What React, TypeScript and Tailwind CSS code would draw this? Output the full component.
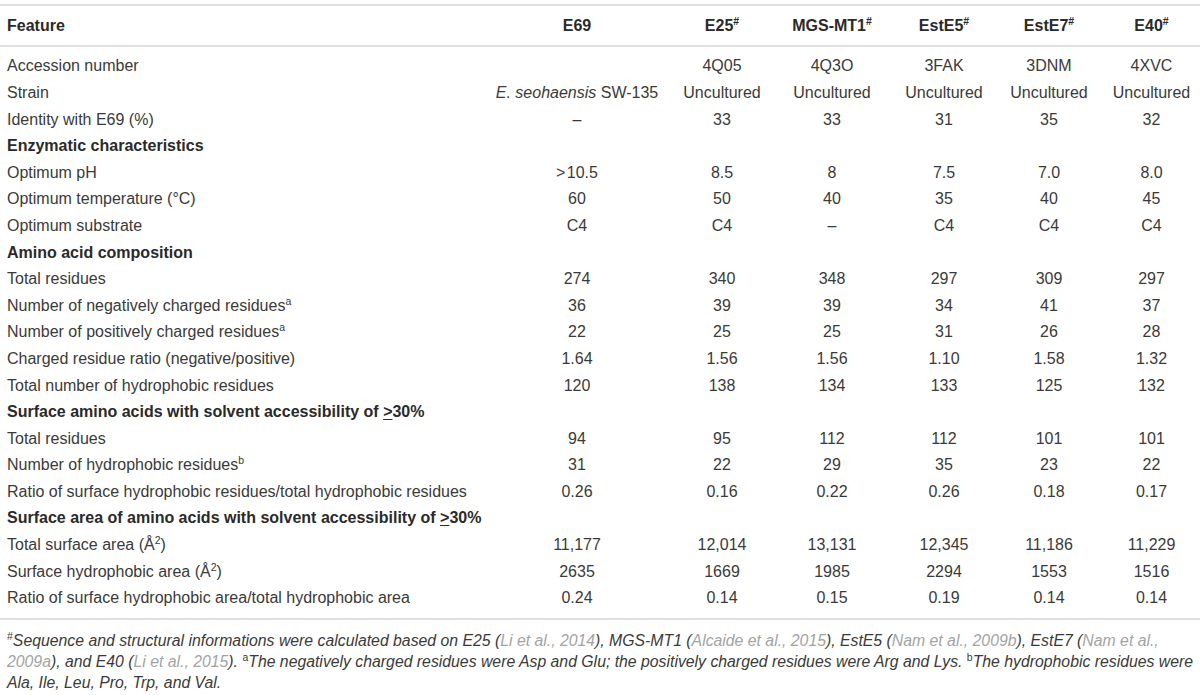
import React from "react";

const Sup = ({ children }: { children: React.ReactNode }) => (
  <span className="relative top-[-6px] text-[10.5px] leading-none not-italic">{children}</span>
);

const G = ({ children }: { children: React.ReactNode }) => (
  <span className="text-[#a3a3a3]">{children}</span>
);

type Row =
  | { kind: "section"; label: React.ReactNode }
  | { kind: "data"; label: React.ReactNode; values: React.ReactNode[] };

const Ge = () => <span className="underline decoration-1 underline-offset-2">&gt;</span>;

const rows: Row[] = [
  { kind: "data", label: "Accession number", values: ["", "4Q05", "4Q3O", "3FAK", "3DNM", "4XVC"] },
  {
    kind: "data",
    label: "Strain",
    values: [
      <>
        <i>E. seohaensis</i> SW-135
      </>,
      "Uncultured",
      "Uncultured",
      "Uncultured",
      "Uncultured",
      "Uncultured",
    ],
  },
  { kind: "data", label: "Identity with E69 (%)", values: ["–", "33", "33", "31", "35", "32"] },
  { kind: "section", label: "Enzymatic characteristics" },
  { kind: "data", label: "Optimum pH", values: [">\u200A10.5", "8.5", "8", "7.5", "7.0", "8.0"] },
  { kind: "data", label: "Optimum temperature (\u00B0C)", values: ["60", "50", "40", "35", "40", "45"] },
  { kind: "data", label: "Optimum substrate", values: ["C4", "C4", "–", "C4", "C4", "C4"] },
  { kind: "section", label: "Amino acid composition" },
  { kind: "data", label: "Total residues", values: ["274", "340", "348", "297", "309", "297"] },
  {
    kind: "data",
    label: (
      <>
        Number of negatively charged residues<Sup>a</Sup>
      </>
    ),
    values: ["36", "39", "39", "34", "41", "37"],
  },
  {
    kind: "data",
    label: (
      <>
        Number of positively charged residues<Sup>a</Sup>
      </>
    ),
    values: ["22", "25", "25", "31", "26", "28"],
  },
  {
    kind: "data",
    label: "Charged residue ratio (negative/positive)",
    values: ["1.64", "1.56", "1.56", "1.10", "1.58", "1.32"],
  },
  {
    kind: "data",
    label: "Total number of hydrophobic residues",
    values: ["120", "138", "134", "133", "125", "132"],
  },
  {
    kind: "section",
    label: (
      <>
        Surface amino acids with solvent accessibility of <Ge />30%
      </>
    ),
  },
  { kind: "data", label: "Total residues", values: ["94", "95", "112", "112", "101", "101"] },
  {
    kind: "data",
    label: (
      <>
        Number of hydrophobic residues<Sup>b</Sup>
      </>
    ),
    values: ["31", "22", "29", "35", "23", "22"],
  },
  {
    kind: "data",
    label: "Ratio of surface hydrophobic residues/total hydrophobic residues",
    values: ["0.26", "0.16", "0.22", "0.26", "0.18", "0.17"],
  },
  {
    kind: "section",
    label: (
      <>
        Surface area of amino acids with solvent accessibility of <Ge />30%
      </>
    ),
  },
  {
    kind: "data",
    label: (
      <>
        Total surface area (Å<Sup>2</Sup>)
      </>
    ),
    values: ["11,177", "12,014", "13,131", "12,345", "11,186", "11,229"],
  },
  {
    kind: "data",
    label: (
      <>
        Surface hydrophobic area (Å<Sup>2</Sup>)
      </>
    ),
    values: ["2635", "1669", "1985", "2294", "1553", "1516"],
  },
  {
    kind: "data",
    label: "Ratio of surface hydrophobic area/total hydrophobic area",
    values: ["0.24", "0.14", "0.15", "0.19", "0.14", "0.14"],
  },
];

const headers: React.ReactNode[] = [
  "E69",
  <>
    E25<Sup>#</Sup>
  </>,
  <>
    MGS-MT1<Sup>#</Sup>
  </>,
  <>
    EstE5<Sup>#</Sup>
  </>,
  <>
    EstE7<Sup>#</Sup>
  </>,
  <>
    E40<Sup>#</Sup>
  </>,
];

const gridCols = "grid grid-cols-[481px_192px_98px_122px_102px_108px_97px]";

export default function App() {
  return (
    <div
      className="w-[1200px] h-[695px] bg-white text-[#3a3a3a] overflow-hidden pt-[4px]"
      style={{ fontFamily: '"Liberation Sans", Arial, sans-serif' }}
    >
      <div className="border-t-2 border-[#e0e0e0]" />
      <div className={`${gridCols} h-[39px] items-center text-[16px] font-bold text-[#2a2a2a]`}>
        <div className="pl-[7px]">Feature</div>
        {headers.map((h, i) => (
          <div key={i} className="text-center whitespace-nowrap">
            {h}
          </div>
        ))}
      </div>
      <div className="border-t-2 border-[#e0e0e0]" />
      <div className="pt-[6.4px] pb-[6px] text-[16px]">
        {rows.map((r, i) =>
          r.kind === "section" ? (
            <div
              key={i}
              className="h-[26.6px] leading-[26.6px] pl-[7px] font-bold whitespace-nowrap text-[#2a2a2a]"
            >
              {r.label}
            </div>
          ) : (
            <div key={i} className={`${gridCols} h-[26.6px] leading-[26.6px]`}>
              <div className="pl-[7px] whitespace-nowrap">{r.label}</div>
              {r.values.map((v, j) => (
                <div key={j} className="text-center whitespace-nowrap">
                  {v}
                </div>
              ))}
            </div>
          )
        )}
      </div>
      <div className="border-t-2 border-[#e0e0e0]" />
      <div className="pt-[10px] pl-[7px] text-[15.8px] leading-[21px] italic whitespace-nowrap">
        <div>
          <Sup>#</Sup>Sequence and structural informations were calculated based on E25 (<G>Li et al., 2014</G>),
          MGS-MT1 (<G>Alcaide et al., 2015</G>), EstE5 (<G>Nam et al., 2009b</G>), EstE7 (<G>Nam et al.,</G>
        </div>
        <div>
          <G>2009a</G>), and E40 (<G>Li et al., 2015</G>). <Sup>a</Sup>The negatively charged residues were Asp and
          Glu; the positively charged residues were Arg and Lys. <Sup>b</Sup>The hydrophobic residues were
        </div>
        <div>Ala, Ile, Leu, Pro, Trp, and Val.</div>
      </div>
    </div>
  );
}
